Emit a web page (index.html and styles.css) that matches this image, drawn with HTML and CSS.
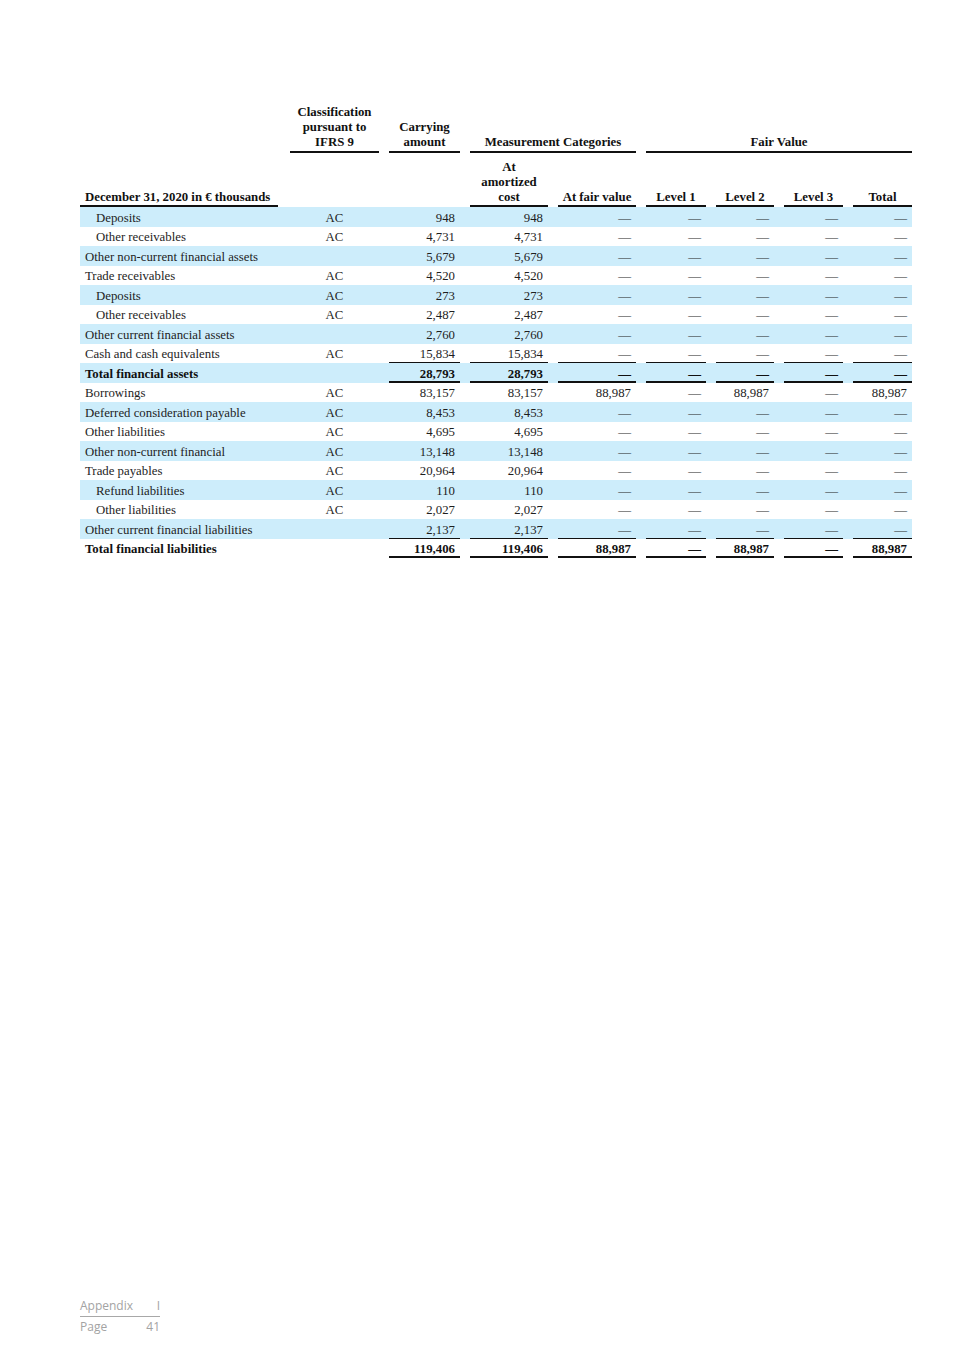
FILE: index.html
```html
<!DOCTYPE html>
<html lang="en">
<head>
<meta charset="utf-8">
<title>Financial instruments</title>
<link rel="stylesheet" href="styles.css">
</head>
<body>
<div class="page">
  <div class="fin" role="table">
    <div class="row head h1" role="row">
      <div class="cell c0"></div>
      <div class="cell"><div class="u">Classification<br>pursuant to<br>IFRS 9</div></div>
      <div class="cell"><div class="u">Carrying<br>amount</div></div>
      <div class="cell span2"><div class="u">Measurement Categories</div></div>
      <div class="cell span4"><div class="u">Fair Value</div></div>
    </div>
    <div class="row head h2" role="row">
      <div class="cell c0"><div class="u lead">December 31, 2020 in € thousands</div></div>
      <div class="cell"></div>
      <div class="cell"></div>
      <div class="cell"><div class="u">At<br>amortized<br>cost</div></div>
      <div class="cell"><div class="u">At fair value</div></div>
      <div class="cell"><div class="u">Level 1</div></div>
      <div class="cell"><div class="u">Level 2</div></div>
      <div class="cell"><div class="u">Level 3</div></div>
      <div class="cell"><div class="u">Total</div></div>
    </div>

    <div class="row blue"><div class="cell c0 ind">Deposits</div><div class="cell cls">AC</div><div class="cell n"><span>948</span></div><div class="cell n"><span>948</span></div><div class="cell n"><span>—</span></div><div class="cell n"><span>—</span></div><div class="cell n"><span>—</span></div><div class="cell n"><span>—</span></div><div class="cell n"><span>—</span></div></div>
    <div class="row"><div class="cell c0 ind">Other receivables</div><div class="cell cls">AC</div><div class="cell n"><span>4,731</span></div><div class="cell n"><span>4,731</span></div><div class="cell n"><span>—</span></div><div class="cell n"><span>—</span></div><div class="cell n"><span>—</span></div><div class="cell n"><span>—</span></div><div class="cell n"><span>—</span></div></div>
    <div class="row blue"><div class="cell c0">Other non-current financial assets</div><div class="cell cls"></div><div class="cell n"><span>5,679</span></div><div class="cell n"><span>5,679</span></div><div class="cell n"><span>—</span></div><div class="cell n"><span>—</span></div><div class="cell n"><span>—</span></div><div class="cell n"><span>—</span></div><div class="cell n"><span>—</span></div></div>
    <div class="row"><div class="cell c0">Trade receivables</div><div class="cell cls">AC</div><div class="cell n"><span>4,520</span></div><div class="cell n"><span>4,520</span></div><div class="cell n"><span>—</span></div><div class="cell n"><span>—</span></div><div class="cell n"><span>—</span></div><div class="cell n"><span>—</span></div><div class="cell n"><span>—</span></div></div>
    <div class="row blue"><div class="cell c0 ind">Deposits</div><div class="cell cls">AC</div><div class="cell n"><span>273</span></div><div class="cell n"><span>273</span></div><div class="cell n"><span>—</span></div><div class="cell n"><span>—</span></div><div class="cell n"><span>—</span></div><div class="cell n"><span>—</span></div><div class="cell n"><span>—</span></div></div>
    <div class="row"><div class="cell c0 ind">Other receivables</div><div class="cell cls">AC</div><div class="cell n"><span>2,487</span></div><div class="cell n"><span>2,487</span></div><div class="cell n"><span>—</span></div><div class="cell n"><span>—</span></div><div class="cell n"><span>—</span></div><div class="cell n"><span>—</span></div><div class="cell n"><span>—</span></div></div>
    <div class="row blue"><div class="cell c0">Other current financial assets</div><div class="cell cls"></div><div class="cell n"><span>2,760</span></div><div class="cell n"><span>2,760</span></div><div class="cell n"><span>—</span></div><div class="cell n"><span>—</span></div><div class="cell n"><span>—</span></div><div class="cell n"><span>—</span></div><div class="cell n"><span>—</span></div></div>
    <div class="row sub"><div class="cell c0">Cash and cash equivalents</div><div class="cell cls">AC</div><div class="cell n"><span>15,834</span></div><div class="cell n"><span>15,834</span></div><div class="cell n"><span>—</span></div><div class="cell n"><span>—</span></div><div class="cell n"><span>—</span></div><div class="cell n"><span>—</span></div><div class="cell n"><span>—</span></div></div>
    <div class="row blue total"><div class="cell c0">Total financial assets</div><div class="cell cls"></div><div class="cell n"><span>28,793</span></div><div class="cell n"><span>28,793</span></div><div class="cell n"><span>—</span></div><div class="cell n"><span>—</span></div><div class="cell n"><span>—</span></div><div class="cell n"><span>—</span></div><div class="cell n"><span>—</span></div></div>
    <div class="row"><div class="cell c0">Borrowings</div><div class="cell cls">AC</div><div class="cell n"><span>83,157</span></div><div class="cell n"><span>83,157</span></div><div class="cell n"><span>88,987</span></div><div class="cell n"><span>—</span></div><div class="cell n"><span>88,987</span></div><div class="cell n"><span>—</span></div><div class="cell n"><span>88,987</span></div></div>
    <div class="row blue"><div class="cell c0">Deferred consideration payable</div><div class="cell cls">AC</div><div class="cell n"><span>8,453</span></div><div class="cell n"><span>8,453</span></div><div class="cell n"><span>—</span></div><div class="cell n"><span>—</span></div><div class="cell n"><span>—</span></div><div class="cell n"><span>—</span></div><div class="cell n"><span>—</span></div></div>
    <div class="row"><div class="cell c0">Other liabilities</div><div class="cell cls">AC</div><div class="cell n"><span>4,695</span></div><div class="cell n"><span>4,695</span></div><div class="cell n"><span>—</span></div><div class="cell n"><span>—</span></div><div class="cell n"><span>—</span></div><div class="cell n"><span>—</span></div><div class="cell n"><span>—</span></div></div>
    <div class="row blue"><div class="cell c0">Other non-current financial</div><div class="cell cls">AC</div><div class="cell n"><span>13,148</span></div><div class="cell n"><span>13,148</span></div><div class="cell n"><span>—</span></div><div class="cell n"><span>—</span></div><div class="cell n"><span>—</span></div><div class="cell n"><span>—</span></div><div class="cell n"><span>—</span></div></div>
    <div class="row"><div class="cell c0">Trade payables</div><div class="cell cls">AC</div><div class="cell n"><span>20,964</span></div><div class="cell n"><span>20,964</span></div><div class="cell n"><span>—</span></div><div class="cell n"><span>—</span></div><div class="cell n"><span>—</span></div><div class="cell n"><span>—</span></div><div class="cell n"><span>—</span></div></div>
    <div class="row blue"><div class="cell c0 ind">Refund liabilities</div><div class="cell cls">AC</div><div class="cell n"><span>110</span></div><div class="cell n"><span>110</span></div><div class="cell n"><span>—</span></div><div class="cell n"><span>—</span></div><div class="cell n"><span>—</span></div><div class="cell n"><span>—</span></div><div class="cell n"><span>—</span></div></div>
    <div class="row"><div class="cell c0 ind">Other liabilities</div><div class="cell cls">AC</div><div class="cell n"><span>2,027</span></div><div class="cell n"><span>2,027</span></div><div class="cell n"><span>—</span></div><div class="cell n"><span>—</span></div><div class="cell n"><span>—</span></div><div class="cell n"><span>—</span></div><div class="cell n"><span>—</span></div></div>
    <div class="row blue sub"><div class="cell c0">Other current financial liabilities</div><div class="cell cls"></div><div class="cell n"><span>2,137</span></div><div class="cell n"><span>2,137</span></div><div class="cell n"><span>—</span></div><div class="cell n"><span>—</span></div><div class="cell n"><span>—</span></div><div class="cell n"><span>—</span></div><div class="cell n"><span>—</span></div></div>
    <div class="row total"><div class="cell c0">Total financial liabilities</div><div class="cell cls"></div><div class="cell n"><span>119,406</span></div><div class="cell n"><span>119,406</span></div><div class="cell n"><span>88,987</span></div><div class="cell n"><span>—</span></div><div class="cell n"><span>88,987</span></div><div class="cell n"><span>—</span></div><div class="cell n"><span>88,987</span></div></div>
  </div>

  <footer class="foot">
    <div class="foot-row appendix"><span>Appendix</span><span>I</span></div>
    <div class="foot-row"><span>Page</span><span>41</span></div>
  </footer>
</div>
</body>
</html>
```

FILE: styles.css
```css
* { box-sizing: border-box; }

html, body {
  margin: 0;
  padding: 0;
  background: #ffffff;
}

.page {
  width: 965px;
  min-height: 1365px;
  padding: 105px 0 28px 80px;
  display: flex;
  flex-direction: column;
}

.fin {
  width: 832px;
  font-family: "Liberation Serif", "Times New Roman", serif;
  font-size: 12.8px;
  color: #1e1e1e;
}

.row {
  display: grid;
  grid-template-columns: 200px 99px 81px 88px 88px 70px 68px 69px 69px;
}

.cell {
  padding-left: 10px;
  min-width: 0;
}

.cell.c0 {
  padding-left: 0;
}

.span2 { grid-column: span 2; }
.span4 { grid-column: span 4; }

/* header */
.head {
  align-items: end;
  font-weight: bold;
  color: #111;
  text-align: center;
}

.head .u {
  line-height: 15px;
  border-bottom: 2px solid #111;
  padding-bottom: 0.5px;
}

.h2 .u {
  margin-top: 7px;
}

.head .u.lead {
  text-align: left;
  padding-left: 5px;
  margin-right: 2px;
}

/* body rows */
.row:not(.head) {
  height: 19.5px;
}

.row:not(.head) .cell {
  height: 19.5px;
  line-height: 18px;
  padding-top: 1.5px;
  white-space: nowrap;
}

.row:not(.head) .cell.c0 {
  padding-left: 5px;
}

.row:not(.head) .cell.c0.ind {
  padding-left: 16px;
}

.row:not(.head) .cell.cls {
  text-align: center;
}

.row:not(.head) .cell.n {
  padding-top: 0;
}

.cell.n span {
  display: block;
  height: 19.5px;
  padding-top: 1.5px;
  padding-right: 5px;
  text-align: right;
}

.row.blue {
  background: #cdedfb;
}

.row.sub .cell.n span {
  border-bottom: 1px solid #111;
}

.row.total {
  font-weight: bold;
  color: #111;
}

.row.total .cell.n span {
  border-bottom: 2px solid #111;
}

/* footer */
.foot {
  margin-top: auto;
  font-family: "Open Sans", "DejaVu Sans", sans-serif;
  font-size: 12px;
  color: #a3a3a3;
  width: 80px;
}

.foot-row {
  display: flex;
  justify-content: space-between;
  line-height: 20px;
  height: 20px;
}

.foot-row.appendix {
  border-bottom: 1px solid #a8a8a8;
  line-height: 18px;
}
```
